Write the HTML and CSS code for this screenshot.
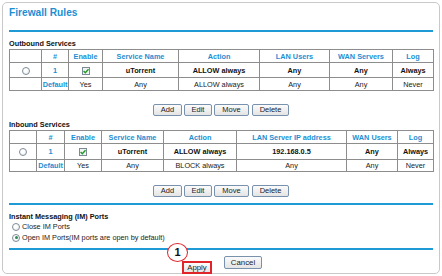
FILE: index.html
```html
<!DOCTYPE html>
<html>
<head>
<meta charset="utf-8">
<link rel="stylesheet" href="styles.css">
</head>
<body>
<div class="panel">
  <h1 class="title">Firewall Rules</h1>
  <div class="rule rule-top"></div>

  <div class="section-label out-label">Outbound Services</div>
  <table class="grid">
    <colgroup>
      <col style="width:32px"><col style="width:27px"><col style="width:34px"><col style="width:76px">
      <col style="width:81px"><col style="width:70px"><col style="width:63px"><col style="width:41px">
    </colgroup>
    <tr class="head"><th></th><th>#</th><th>Enable</th><th>Service Name</th><th>Action</th><th>LAN Users</th><th>WAN Servers</th><th>Log</th></tr>
    <tr class="r1"><td><span class="radio"></span></td><td class="blue">1</td><td><span class="check"><svg width="8" height="8" viewBox="0 0 8 8"><path d="M1.6 4.1 L3.3 5.8 L6.5 2.2" fill="none" stroke="#1f9a2a" stroke-width="1.4"/></svg></span></td><td>uTorrent</td><td>ALLOW always</td><td>Any</td><td>Any</td><td>Always</td></tr>
    <tr class="r2"><td></td><td class="blue">Default</td><td>Yes</td><td>Any</td><td>ALLOW always</td><td>Any</td><td>Any</td><td>Never</td></tr>
  </table>
  <div class="btns">
    <button class="btn w-add">Add</button><button class="btn w-edit">Edit</button><button class="btn w-move">Move</button><button class="btn w-del">Delete</button>
  </div>

  <div class="section-label in-label">Inbound Services</div>
  <table class="grid">
    <colgroup>
      <col style="width:27px"><col style="width:28px"><col style="width:37px"><col style="width:62px">
      <col style="width:73px"><col style="width:110px"><col style="width:51px"><col style="width:36px">
    </colgroup>
    <tr class="head"><th></th><th>#</th><th>Enable</th><th>Service Name</th><th>Action</th><th>LAN Server IP address</th><th>WAN Users</th><th>Log</th></tr>
    <tr class="r1 tall"><td><span class="radio"></span></td><td class="blue">1</td><td><span class="check"><svg width="8" height="8" viewBox="0 0 8 8"><path d="M1.6 4.1 L3.3 5.8 L6.5 2.2" fill="none" stroke="#1f9a2a" stroke-width="1.4"/></svg></span></td><td>uTorrent</td><td>ALLOW always</td><td>192.168.0.5</td><td>Any</td><td>Always</td></tr>
    <tr class="r2 short"><td></td><td class="blue">Default</td><td>Yes</td><td>Any</td><td>BLOCK always</td><td>Any</td><td>Any</td><td>Never</td></tr>
  </table>
  <div class="btns">
    <button class="btn w-add">Add</button><button class="btn w-edit">Edit</button><button class="btn w-move">Move</button><button class="btn w-del">Delete</button>
  </div>

  <div class="rule rule-mid"></div>
  <div class="section-label im-label">Instant Messaging (IM) Ports</div>
  <div class="opt"><span class="radio"></span><span>Close IM Ports</span></div>
  <div class="opt"><span class="radio on"></span><span>Open IM Ports(IM ports are open by default)</span></div>
  <div class="rule rule-bot"></div>

  <div class="actions">
    <span class="apply-wrap">
      <button class="btn apply">Apply</button>
      <span class="badge">1</span>
    </span>
    <button class="btn cancel">Cancel</button>
  </div>
</div>
</body>
</html>
```
FILE: styles.css
```css
* { box-sizing: border-box; }
html, body { margin: 0; padding: 0; background: #fff; }
body { font-family: "Liberation Sans", Arial, sans-serif; color: #111; }

.panel {
  margin: 2px;
  width: 438px;
  height: 272px;
  border: 1px solid #c9c9c9;
  border-radius: 5px;
  padding: 0 6px;
}

.title {
  margin: 4px 0 0 0;
  font-size: 10.2px;
  line-height: 12px;
  font-weight: bold;
  color: #1c8fd3;
}

.rule { height: 2px; background: #1e9bd7; }
.rule-top { margin-top: 11px; }
.rule-mid { margin-top: 6px; }
.rule-bot { margin-top: 5px; }

.section-label {
  font-size: 7.3px;
  line-height: 9px;
  font-weight: bold;
  color: #111;
}
.out-label { margin-top: 7px; }
.in-label { margin-top: 4px; }
.im-label { margin-top: 7px; }

.grid {
  margin-top: 1px;
  width: 424px;
  table-layout: fixed;
  border-collapse: collapse;
  font-size: 7.3px;
}
.grid th, .grid td {
  border: 1px solid #8d8d8d;
  padding: 0;
  text-align: center;
  vertical-align: middle;
  white-space: nowrap;
  overflow: hidden;
}
.grid th { color: #1c8fd3; font-weight: bold; height: 13px; }
.grid .r1 td { font-weight: bold; height: 15px; }
.grid .r2 td { height: 13px; color: #222; }
.grid .tall td { height: 16px; }
.grid .short td { height: 12px; }
.grid td.blue { color: #1c8fd3; font-weight: bold; }

.radio {
  display: inline-block;
  width: 8px;
  height: 8px;
  border-radius: 50%;
  border: 1px solid #7f8c99;
  background: radial-gradient(circle at 40% 35%, #ffffff 30%, #e4e7ea 100%);
  vertical-align: middle;
  position: relative;
}
.radio.on::after {
  content: "";
  position: absolute;
  left: 1.5px; top: 1.5px;
  width: 3px; height: 3px;
  border-radius: 50%;
  background: #2c8a52;
}

.check {
  display: inline-block;
  width: 8px;
  height: 8px;
  border: 1px solid #7a8a98;
  background: #f1f4f1;
  vertical-align: middle;
  line-height: 0;
}
.check svg { display: block; margin: -1px 0 0 -1px; }

.btns {
  margin-top: 13px;
  display: flex;
  justify-content: center;
  gap: 2px;
  height: 12px;
}
.btn {
  font-family: "Liberation Sans", Arial, sans-serif;
  font-size: 7.5px;
  color: #222;
  height: 12px;
  padding: 0;
  border: 1px solid #7891ad;
  border-radius: 2px;
  background: linear-gradient(#fbfbfb, #e4e4e4);
  line-height: 10px;
}
.w-add { width: 29px; }
.w-edit { width: 28px; }
.w-move { width: 35px; }
.w-del { width: 37px; margin-left: 1px; }

.opt {
  display: flex;
  align-items: center;
  gap: 2px;
  height: 11px;
  padding-left: 3px;
  font-size: 7.3px;
  color: #222;
}

.actions {
  margin-top: 6px;
  display: flex;
  justify-content: center;
  gap: 12px;
  padding-left: 2px;
}
.apply-wrap { position: relative; display: inline-block; }
.apply {
  width: 30px;
  height: 13px;
  border: 2px solid #e0242a;
  border-radius: 0;
  line-height: 9px;
  font-size: 7.8px;
}
.cancel { width: 38px; height: 13px; font-size: 7.8px; }
.badge {
  position: absolute;
  left: -15px;
  top: -13px;
  width: 21px;
  height: 19px;
  border-radius: 50%;
  border: 1px solid #e0242a;
  background: #fff;
  color: #111;
  font-weight: bold;
  font-size: 11px;
  line-height: 17px;
  text-align: center;
}
```
